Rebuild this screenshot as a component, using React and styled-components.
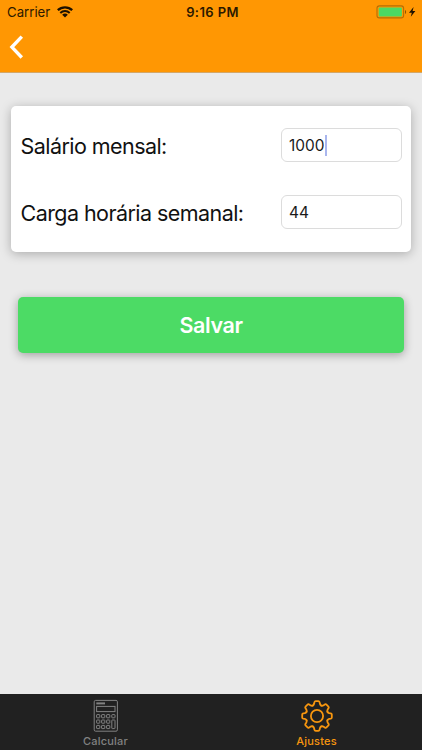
import React, { useState } from "react";
import styled, { createGlobalStyle } from "styled-components";

const TEETH = [0, 45, 90, 135, 180, 225, 270, 315];

const WifiIcon = () => (
  <svg width="16" height="12" viewBox="0 0 16 12" fill="none" stroke="#1c1000">
    <path d="M0.8 4.2C4.8 0.4 11.2 0.4 15.2 4.2" strokeWidth="2.4" />
    <path d="M3.3 6.9C6 4.4 10 4.4 12.7 6.9" strokeWidth="2" />
    <path d="M5.2 8.7C6.8 7.2 9.2 7.2 10.8 8.7L8 11.6Z" fill="#1c1000" stroke="none" />
  </svg>
);

const BatteryIcon = () => (
  <svg width="42" height="14" viewBox="0 0 42 14">
    <rect x="1" y="0.9" width="26.6" height="12" rx="2.4" fill="none" stroke="#b56f06" strokeWidth="1.1" />
    <rect x="2.7" y="2.4" width="23.2" height="9" rx="1" fill="#4cd964" />
    <path d="M29 5V9C30.5 8.4 30.5 5.6 29 5Z" fill="#8a5500" />
    <path d="M37.6 2L33 7.7H35.8L34.8 11.8L39.4 6H36.6Z" fill="#1d1100" />
  </svg>
);

const CalculatorIcon = () => (
  <svg width="26" height="34" viewBox="0 0 26 34" fill="none" stroke="currentColor" strokeWidth="1">
    <rect x="1.2" y="1.4" width="23.2" height="30.8" rx="1.4" />
    <path d="M3.3 4.4H12" strokeWidth="2" />
    <rect x="3.6" y="7.4" width="18.4" height="5.2" />
    {[15.6, 21, 26.4].map((y) =>
      [3.6, 8.6, 13.6].map((x) => (
        <rect key={`${x}-${y}`} x={x} y={y} width="3.2" height="3.2" rx="0.5" />
      ))
    )}
    <rect x="18.8" y="15.6" width="3.2" height="3.2" rx="0.5" />
    <rect x="18.8" y="21" width="3.2" height="8.6" rx="0.5" />
  </svg>
);

const GearIcon = () => (
  <svg width="34" height="34" viewBox="-17 -17 34 34" fill="none" stroke="currentColor" strokeWidth="1.8">
    <circle r="6.1" />
    {TEETH.map((angle) => (
      <path
        key={angle}
        transform={`rotate(${angle})`}
        strokeLinecap="round"
        d="M-4.3 -10.4Q-3.2 -11 -2.9 -12.2L-2.6 -13.8Q-2.3 -14.8 -1.4 -14.8H1.4Q2.3 -14.8 2.6 -13.8L2.9 -12.2Q3.2 -11 4.3 -10.4"
      />
    ))}
  </svg>
);

const App = () => {
  const [salary, setSalary] = useState("1000");
  const [hours, setHours] = useState("44");

  return (
    <Screen>
      <GlobalStyle />
      <Header>
        <StatusBar>
          <Carrier>
            <span>Carrier</span>
            <WifiIcon />
          </Carrier>
          <Clock>9:16 PM</Clock>
          <Battery>
            <BatteryIcon />
          </Battery>
        </StatusBar>
        <BackButton aria-label="Voltar">
          <svg width="16" height="26" viewBox="0 0 16 26" fill="none" stroke="#fff" strokeWidth="3.4">
            <path d="M13.8 2.7L3.9 13.1L13.8 23.5" />
          </svg>
        </BackButton>
      </Header>
      <Content>
        <Card>
          <Field>
            <Label>Salário mensal:</Label>
            <InputBox>
              <Input size={4} width="35px" value={salary} onChange={(e) => setSalary(e.target.value)} />
              <Caret />
            </InputBox>
          </Field>
          <Field>
            <Label>Carga horária semanal:</Label>
            <InputBox>
              <Input size={4} width="100%" value={hours} onChange={(e) => setHours(e.target.value)} />
            </InputBox>
          </Field>
        </Card>
        <SaveButton>Salvar</SaveButton>
      </Content>
      <TabBar>
        <Tab>
          <CalculatorIcon />
          <TabLabel>Calcular</TabLabel>
        </Tab>
        <Tab active>
          <GearIcon />
          <TabLabel>Ajustes</TabLabel>
        </Tab>
      </TabBar>
    </Screen>
  );
};

export default App;

const GlobalStyle = createGlobalStyle`
  * {
    box-sizing: border-box;
  }

  body {
    margin: 0;
    font-family: "Inter", "Liberation Sans", sans-serif;
  }

  svg {
    display: block;
    flex-shrink: 0;
  }
`;

const Screen = styled.div`
  display: flex;
  flex-direction: column;
  height: 100vh;
  overflow: hidden;
  background: #eaeaea;
`;

const Header = styled.div`
  height: 73px;
  background: #ff9703;
  border-bottom: 1px solid #d3a768;
`;

const StatusBar = styled.div`
  display: grid;
  grid-template-columns: 1fr auto 1fr;
  align-items: center;
  height: 23px;
  padding: 1px 4px 0 7px;
  color: #2b1900;
  font-size: 13.2px;
`;

const Carrier = styled.div`
  display: flex;
  align-items: center;
  gap: 7px;
`;

const Clock = styled.div`
  font-weight: 600;
  font-size: 13px;
  letter-spacing: 0.4px;
`;

const Battery = styled.div`
  display: flex;
  justify-content: flex-end;
`;

const BackButton = styled.button`
  display: block;
  margin: 11px 0 0 8px;
  padding: 0;
  border: none;
  background: none;
`;

const Content = styled.div`
  flex: 1;
  padding: 33px 11px 0;
`;

const Card = styled.div`
  display: flex;
  flex-direction: column;
  gap: 33px;
  height: 146px;
  padding: 22px 9px 0 9.5px;
  border-radius: 5px;
  background: #fff;
  box-shadow: 0 2px 11px rgba(0, 0, 0, 0.27);
`;

const Field = styled.div`
  display: flex;
  align-items: center;
  justify-content: space-between;
  height: 34px;
`;

const Label = styled.label`
  padding-top: 1px;
  color: #111;
  font-size: 21.5px;
  letter-spacing: -0.56px;
  white-space: nowrap;
`;

const InputBox = styled.div`
  display: flex;
  align-items: center;
  width: 121px;
  height: 34px;
  padding: 0 7px;
  border: 1px solid #dcdcdc;
  border-radius: 6px;
`;

const Input = styled.input`
  width: ${(props) => props.width};
  padding: 0;
  border: none;
  outline: none;
  background: none;
  color: #1a1a1a;
  font-family: inherit;
  font-size: 15.4px;
`;

const Caret = styled.span`
  width: 2px;
  height: 21px;
  margin-left: 1px;
  background: #a9b6ee;
`;

const SaveButton = styled.button`
  display: block;
  width: 386px;
  height: 56px;
  margin: 45px 0 0 7px;
  padding: 0;
  border: none;
  border-radius: 5px;
  background: #4cdb65;
  box-shadow: 0 2px 10px rgba(0, 0, 0, 0.32);
  color: #fff;
  font-family: inherit;
  font-size: 21.5px;
  font-weight: 600;
  letter-spacing: -0.4px;
`;

const TabBar = styled.div`
  display: grid;
  grid-template-columns: 1fr 1fr;
  height: 56px;
  background: #212121;
`;

const Tab = styled.div`
  display: flex;
  flex-direction: column;
  align-items: center;
  padding-top: 5px;
  color: ${(props) => (props.active ? "#f7960f" : "#828282")};
`;

const TabLabel = styled.span`
  margin-top: 2px;
  font-size: 11px;
  font-weight: 500;
  line-height: 13px;
  letter-spacing: 0.2px;
`;
